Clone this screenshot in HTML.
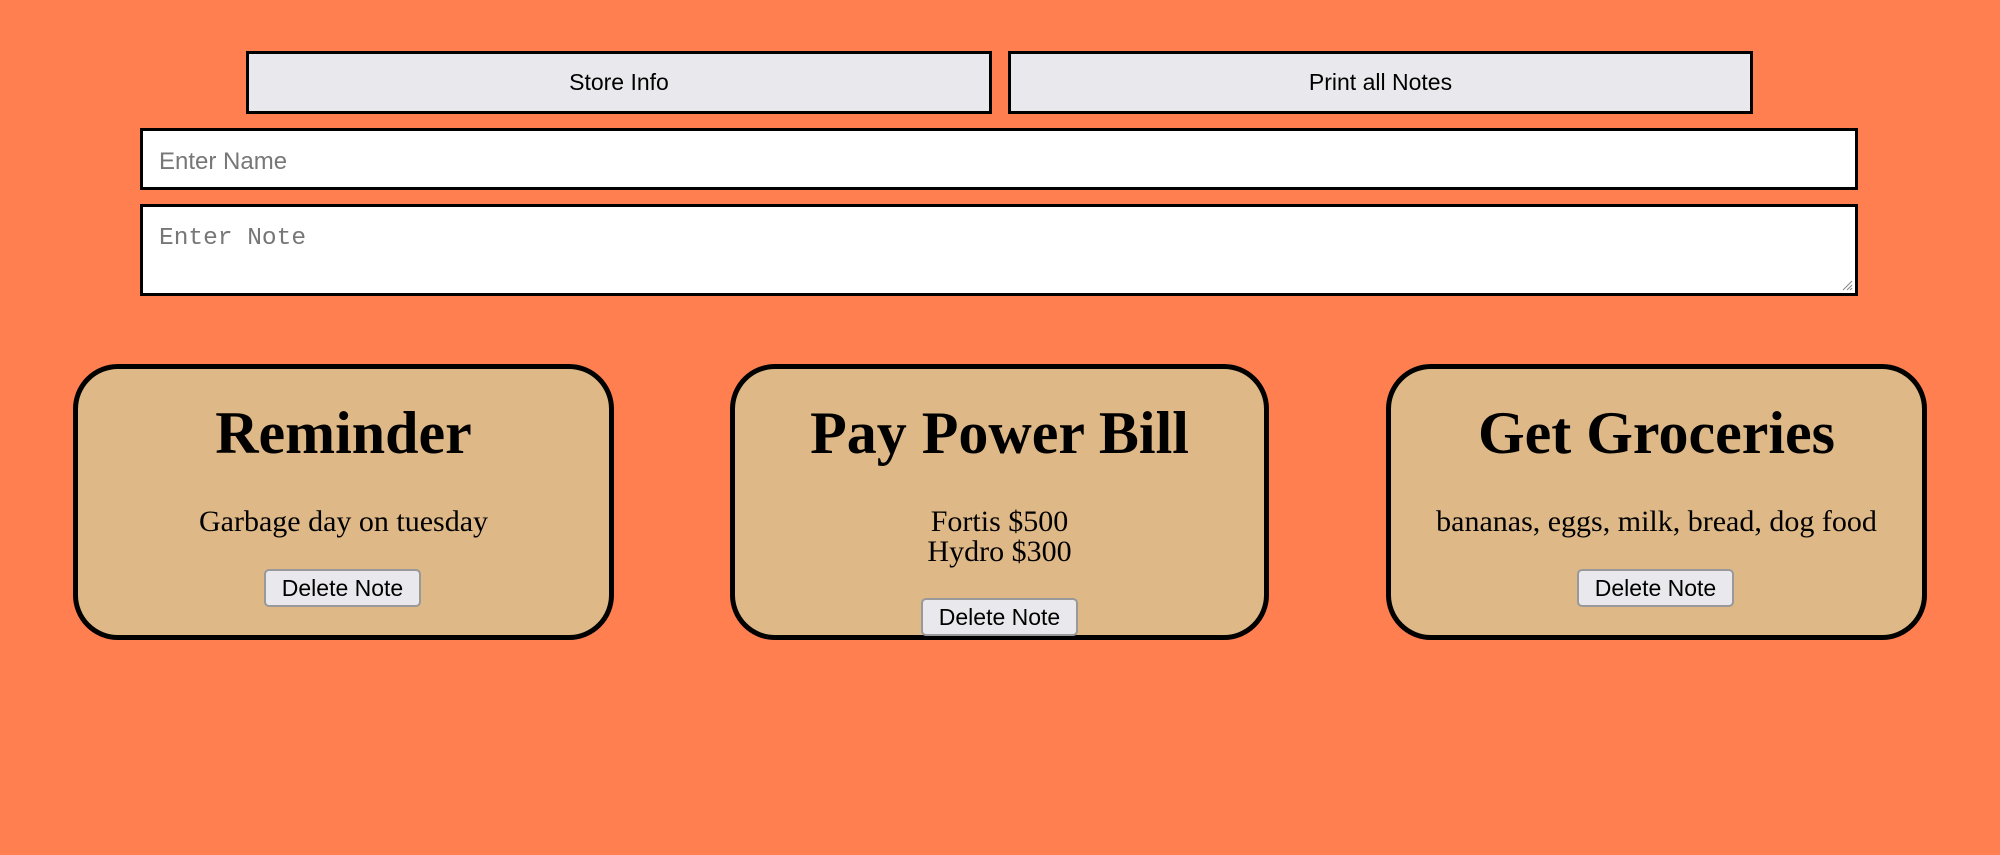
<!DOCTYPE html>
<html><head><meta charset="utf-8"><style>
html,body{margin:0;padding:0;}
body{width:2000px;height:855px;background:#ff7f50;position:relative;overflow:hidden;font-family:"Liberation Sans",sans-serif;}
.btn{position:absolute;top:51px;height:63px;box-sizing:border-box;border:3px solid #000;background:#e9e9ed;font-size:23px;display:flex;align-items:center;justify-content:center;color:#000;}
.inp{position:absolute;left:140px;width:1718px;box-sizing:border-box;border:3px solid #000;background:#fff;color:#777;}
.card{position:absolute;top:364px;height:276px;box-sizing:border-box;border:5px solid #000;border-radius:45px;background:#deb887;font-family:"Liberation Serif",serif;}
.t{position:absolute;left:0;right:0;text-align:center;font-weight:bold;font-size:60px;line-height:60px;top:34px;}
.b{position:absolute;left:0;right:0;text-align:center;font-size:30px;line-height:30px;top:138px;}
.d{position:absolute;height:38px;box-sizing:border-box;border:2px solid #999;border-radius:5px;background:#e9e9ed;font-family:"Liberation Sans",sans-serif;font-size:23px;display:flex;align-items:center;justify-content:center;width:157px;}
</style></head><body>
<div class="btn" style="left:246px;width:746px;">Store Info</div>
<div class="btn" style="left:1008px;width:745px;">Print all Notes</div>
<div class="inp" style="top:128px;height:62px;font-size:24px;line-height:62px;padding-left:16px;">Enter Name</div>
<div class="inp" style="top:204px;height:92px;font-family:'Liberation Mono',monospace;font-size:24.5px;padding:18px 0 0 16px;">Enter Note
<svg style="position:absolute;right:2px;bottom:2px" width="12" height="12"><path d="M11 2L2 11M11 6L6 11M11 9L9 11" stroke="#888" stroke-width="1"/></svg></div>

<div class="card" style="left:73px;width:541px;">
<div class="t">Reminder</div>
<div class="b">Garbage day on tuesday</div>
<div class="d" style="left:186px;top:200px;">Delete Note</div>
</div>
<div class="card" style="left:730px;width:539px;">
<div class="t">Pay Power Bill</div>
<div class="b">Fortis $500<br>Hydro $300</div>
<div class="d" style="left:186px;top:229px;">Delete Note</div>
</div>
<div class="card" style="left:1386px;width:541px;">
<div class="t">Get Groceries</div>
<div class="b">bananas, eggs, milk, bread, dog food</div>
<div class="d" style="left:186px;top:200px;">Delete Note</div>
</div>
</body></html>
